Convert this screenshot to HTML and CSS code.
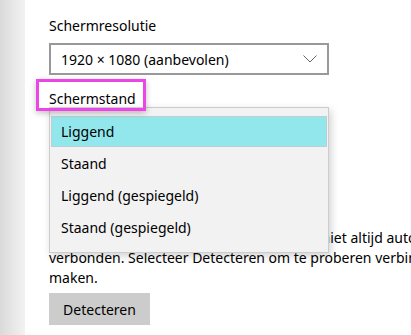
FILE: index.html
```html
<!DOCTYPE html>
<html lang="nl">
<head>
  <meta charset="UTF-8" />
  <title>Beeldscherm</title>
  <link rel="stylesheet" href="styles.css">
</head>
<body>
  <div class="window">
    <div class="sidebar"></div>

    <div class="content">
      <div class="label">Schermresolutie</div>
      <div class="select">
        <span>1920 × 1080 (aanbevolen)</span>
        <svg class="chevron" width="14" height="8" viewBox="0 0 14 8">
          <path d="M0.5 0.5 L7 7 L13.5 0.5" fill="none" stroke="#666" stroke-width="1"/>
        </svg>
      </div>

      <div class="label orient">Schermstand</div>
      <div class="select hidden-select"><span>Liggend</span></div>

      <p class="note">Oudere beeldschermen worden mogelijk niet altijd automatisch verbonden. Selecteer Detecteren om te proberen verbinding te maken.</p>

      <button class="detect">Detecteren</button>

      <!-- open dropdown of Schermstand -->
      <ul class="dropdown">
        <li class="active">Liggend</li>
        <li>Staand</li>
        <li>Liggend (gespiegeld)</li>
        <li>Staand (gespiegeld)</li>
      </ul>

      <div class="highlight"></div>
    </div>
  </div>
</body>
</html>
```

FILE: styles.css
```css
html, body { margin: 0; padding: 0; background: #fff; overflow: hidden; }
body { font-family: "Noto Sans", "Open Sans", Arial, sans-serif; font-size: 14px; color: #000; }

.window { display: flex; width: 411px; height: 335px; }
.sidebar {
  width: 25px; flex: none;
  background: linear-gradient(to right, #dadada, #ebebeb 70%, #f2f2f2);
}
.content { position: relative; flex: none; width: 600px; padding-left: 24px; padding-top: 16px; }

.label { line-height: 20px; height: 20px; }
.select {
  box-sizing: border-box; width: 280px; height: 32px; margin-top: 7px;
  border: 2px solid #999; display: flex; align-items: center; justify-content: space-between;
  padding: 0 10px 0 10px;
}
.orient { margin-top: 14px; }
.hidden-select { margin-top: 6px; }

.note { margin: 81px 0 0; width: 440px; line-height: 20px; }

.detect {
  margin-top: 5px; height: 32px; width: 101px; border: none; background: #ccc;
  font: inherit; padding: 0; color: #000;
}

.dropdown {
  position: absolute; left: 24px; top: 107px; width: 276px; margin: 0;
  list-style: none; padding: 8px 1px 8px; background: #f2f2f2;
  border: 1px solid #ccc; box-shadow: 2px 3px 8px rgba(0,0,0,0.18);
}
.dropdown li { height: 32px; line-height: 31px; padding-left: 10px; box-sizing: border-box; }
.dropdown li.active { background: #92e7ed; border: 1px solid #bccfd1; height: 31px; line-height: 29px; padding-left: 9px; margin-bottom: 1px; }

.highlight {
  position: absolute; left: 11px; top: 79px; width: 104px; height: 26px;
  border: 3px solid #ec45e6; box-shadow: 0 2px 6px rgba(0,0,0,0.25);
}
```
